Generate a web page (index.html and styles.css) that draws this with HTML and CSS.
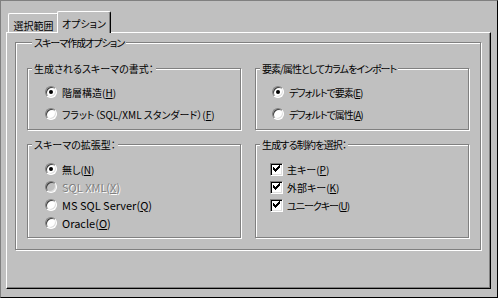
FILE: index.html
```html
<!DOCTYPE html>
<html lang="ja">
<head>
<meta charset="utf-8">
<link rel="stylesheet" href="styles.css">
</head>
<body>
<div class="window">
  <div class="tabs">
    <div class="tab">選択範囲</div>
    <div class="tab active">オプション</div>
  </div>
  <div class="panel">
    <div class="group outer">
      <div class="legend legend-outer ls1">スキーマ作成オプション</div>
      <div class="grid">
        <div class="group">
          <div class="legend">生成されるスキーマの書式：</div>
          <div class="rows rows-wide col-l">
            <div class="opt"><span class="radio on"></span><span>階層構造(<u>H</u>)</span></div>
            <div class="opt"><span class="radio"></span><span>フラット（SQL/XML スタンダード）(<u>F</u>)</span></div>
          </div>
        </div>
        <div class="group">
          <div class="legend ls1">要素/属性としてカラムをインポート</div>
          <div class="rows rows-wide col-r">
            <div class="opt"><span class="radio on"></span><span class="ls1">デフォルトで要素(<u>E</u>)</span></div>
            <div class="opt"><span class="radio"></span><span class="ls1">デフォルトで属性(<u>A</u>)</span></div>
          </div>
        </div>
        <div class="group">
          <div class="legend">スキーマの拡張型：</div>
          <div class="rows rows-narrow col-l">
            <div class="opt"><span class="radio on"></span><span>無し(<u>N</u>)</span></div>
            <div class="opt disabled"><span class="radio"></span><span class="latin">SQL XML(<u>X</u>)</span></div>
            <div class="opt"><span class="radio"></span><span class="latin">MS SQL Server(<u>Q</u>)</span></div>
            <div class="opt"><span class="radio"></span><span class="latin">Oracle(<u>O</u>)</span></div>
          </div>
        </div>
        <div class="group">
          <div class="legend ls08">生成する制約を選択：</div>
          <div class="rows rows-narrow col-c">
            <div class="opt"><span class="check"><svg width="9" height="9" viewBox="0 0 9 9"><path d="M1 2h1v3H1z M2 3h1v3H2z M3 4h1v3H3z M4 3h1v3H4z M5 2h1v3H5z M6 1h1v3H6z M7 0h1v3H7z" fill="#000"/></svg></span><span>主キー(<u>P</u>)</span></div>
            <div class="opt"><span class="check"><svg width="9" height="9" viewBox="0 0 9 9"><path d="M1 2h1v3H1z M2 3h1v3H2z M3 4h1v3H3z M4 3h1v3H4z M5 2h1v3H5z M6 1h1v3H6z M7 0h1v3H7z" fill="#000"/></svg></span><span>外部キー(<u>K</u>)</span></div>
            <div class="opt"><span class="check"><svg width="9" height="9" viewBox="0 0 9 9"><path d="M1 2h1v3H1z M2 3h1v3H2z M3 4h1v3H3z M4 3h1v3H4z M5 2h1v3H5z M6 1h1v3H6z M7 0h1v3H7z" fill="#000"/></svg></span><span class="ls1">ユニークキー(<u>U</u>)</span></div>
          </div>
        </div>
      </div>
    </div>
  </div>
</div>
</body>
</html>
```
FILE: styles.css
```css
* { box-sizing: border-box; }
html, body { margin: 0; padding: 0; }
body {
  width: 498px;
  height: 298px;
  overflow: hidden;
  background: #c0c0c0;
  color: #000;
  font-family: "Noto Sans CJK JP", "Liberation Sans", sans-serif;
  font-size: 10px;
  line-height: 13px;
  font-feature-settings: "palt";
}
.window {
  width: 498px;
  height: 298px;
  border: 1px solid;
  border-color: #808080 #000 #000 #808080;
  padding: 0 6px 8px 5px;
  display: flex;
  flex-direction: column;
}
.tabs {
  display: flex;
  align-items: flex-end;
  padding: 10px 0 0 2px;
}
.tab {
  width: 51px;
  height: 19px;
  padding-top: 5px;
  text-align: center;
  border-top: 1px solid #fff;
  border-left: 1px solid #fff;
  border-right: 1px solid #000;
  border-radius: 2px 2px 0 0;
  box-shadow: inset -1px 0 0 #808080;
  background: #c0c0c0;
}
.tab.active {
  width: 54px;
  height: 22px;
  padding-top: 5px;
  margin-left: -2px;
  margin-bottom: -1px;
  position: relative;
  z-index: 1;
}
.panel {
  flex: 1;
  border: 1px solid;
  border-color: #fff #000 #000 #fff;
  box-shadow: inset -1px -1px 0 #808080;
  padding: 9px 9px 0 8px;
}
.group {
  border: 1px solid #808080;
  box-shadow: 1px 1px 0 #fff, inset 1px 1px 0 #fff;
  display: flex;
  flex-direction: column;
}
.outer {
  padding: 0 11px 11px 11px;
}
.legend {
  align-self: flex-start;
  height: 13px;
  margin: -7px 0 0 4px;
  padding: 0 2px;
  background: #c0c0c0;
  white-space: nowrap;
}
.legend-outer { margin-left: 5px; }
.grid {
  margin-top: 19px;
  display: grid;
  grid-template-columns: 214px 214px;
  grid-template-rows: 62px 94px;
  gap: 14px;
}
.rows { display: flex; flex-direction: column; }
.rows-wide { margin-top: 6px; }
.rows-wide .opt { height: 22px; }
.rows-narrow { margin-top: 9px; }
.rows-narrow .opt { height: 18px; }
.col-l { padding-left: 17px; }
.col-r { padding-left: 16px; }
.col-c { padding-left: 14px; }
.opt {
  display: flex;
  align-items: center;
  white-space: nowrap;
}
.opt u { text-decoration: underline; text-underline-offset: 1px; }
.latin { font-size: 11px; }
.ls08 { letter-spacing: -0.8px; }
.ls1 { letter-spacing: -1px; }
.radio {
  flex: none;
  width: 12px;
  height: 12px;
  margin-right: 5px;
  border-radius: 50%;
  background: #fff;
  border: 1px solid;
  border-color: #808080 #fff #fff #808080;
  box-shadow: inset 1px 1px 0 #404040, inset -1px -1px 0 #dfdfdf;
  display: flex;
  align-items: center;
  justify-content: center;
}
.radio.on::after {
  content: "";
  width: 4px;
  height: 4px;
  border-radius: 50%;
  background: #000;
}
.disabled { color: #808080; text-shadow: 1px 1px 0 #fff; }
.disabled .radio { background: #c0c0c0; }
.check {
  flex: none;
  width: 13px;
  height: 13px;
  margin-right: 4px;
  background: #fff;
  border: 1px solid;
  border-color: #808080 #fff #fff #808080;
  box-shadow: inset 1px 1px 0 #000, inset -1px -1px 0 #dfdfdf;
  padding: 1px;
  display: flex;
}
.check svg { display: block; }
```
